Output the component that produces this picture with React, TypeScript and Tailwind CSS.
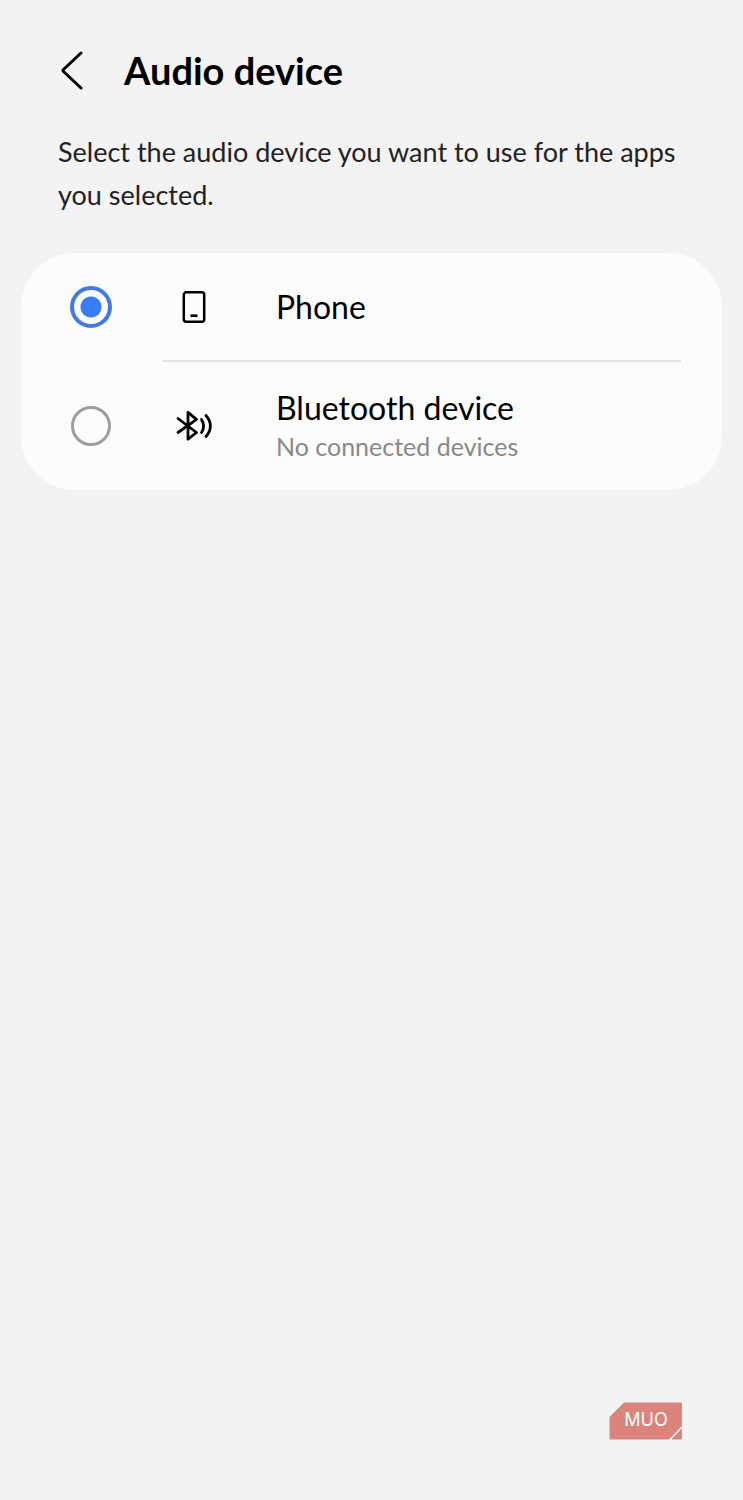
import React from 'react';

interface AudioDevice {
  id: string;
  name: string;
  status?: string;
  icon: React.ReactNode;
}

const PhoneIcon = () => (
  <svg width="40" height="40" viewBox="0 0 40 40" fill="none" stroke="#000000" aria-hidden="true">
    <rect x="9.800" y="5.300" width="20.400" height="29.400" rx="2.500" strokeWidth="2.500" />
    <path d="M16.500 28.700h7" strokeWidth="2.600" />
  </svg>
);

const BluetoothIcon = () => (
  <svg
    width="40"
    height="40"
    viewBox="0 0 40 40"
    fill="none"
    stroke="#000000"
    strokeWidth="2.800"
    strokeLinecap="round"
    strokeLinejoin="round"
    aria-hidden="true"
  >
    <path d="M4 12.500 22.500 26.500 14 33.200V6.300l8.500 7L4 26.500" />
    <path d="M27.500 13.500c2.600 4 2.600 9 0 13" />
    <path d="M32 9.500c5.800 6.500 5.800 14.500 0 21" />
  </svg>
);

const devices: AudioDevice[] = [
  { id: 'phone', name: 'Phone', icon: <PhoneIcon /> },
  { id: 'bluetooth', name: 'Bluetooth device', status: 'No connected devices', icon: <BluetoothIcon /> },
];

const Watermark = () => (
  <svg width="74" height="38" viewBox="0 0 74 38" role="img" aria-label="MUO">
    <path d="M15 1H72.500V24L60 37H1V15Z" fill="#dc837c" stroke="#c98f8b" />
    <path d="M72.500 27V37H63Z" fill="#dc837c" stroke="#c98f8b" />
    <text x="37" y="24" textAnchor="middle" fill="#ffffff" fontFamily="Inter, sans-serif" fontSize="18">
      MUO
    </text>
  </svg>
);

export default function App() {
  const [selected, setSelected] = React.useState('phone');

  return (
    <div className="flex min-h-screen flex-col bg-[#f3f3f3] font-['Lato',sans-serif] text-black">
      {/* Header */}
      <header className="flex items-center gap-8 px-14 pt-[46px]">
        <button type="button" aria-label="Back" className="flex h-12 w-9 items-center">
          <svg width="32" height="40" viewBox="0 0 32 40" fill="none" stroke="#000000" strokeWidth="3" strokeLinecap="round" strokeLinejoin="round">
            <path d="M25 3 7.500 19.500Q6.500 20.500 7.500 21.500L25 38" />
          </svg>
        </button>
        <h1 className="text-[38px] leading-12 font-bold">Audio device</h1>
      </header>

      <p className="px-[58px] pt-9 text-[27px] leading-[43px] text-[#222222]">
        Select the audio device you want to use for the apps you selected.
      </p>

      {/* Device list */}
      <div role="radiogroup" aria-label="Audio device" className="mx-[21px] mt-[37px] rounded-[54px] bg-[#fcfcfc]">
        {devices.map((device, i) => (
          <React.Fragment key={device.id}>
            {i > 0 && <div className="mr-[41px] ml-[141px] h-[2px] bg-[#e3e3e3]" />}
            <label
              className={`flex cursor-pointer items-center pr-10 pl-[49px] ${device.status ? 'h-32' : 'h-[107px]'}`}
            >
              <input
                type="radio"
                name="device"
                value={device.id}
                checked={selected === device.id}
                onChange={() => setSelected(device.id)}
                className="m-px size-10 shrink-0 appearance-none rounded-full border-[3px] border-[#9d9da2] checked:m-0 checked:size-[42px] checked:border-4 checked:border-[#4279e3] checked:bg-[radial-gradient(circle,#3b7cf7_10px,transparent_11px)]"
              />
              <span className="ml-[62px] shrink-0">{device.icon}</span>
              <span className="ml-[62px] flex flex-col">
                <span className="text-[32px] leading-10">{device.name}</span>
                {device.status && <span className="text-[25px] leading-9 text-[#888888]">{device.status}</span>}
              </span>
            </label>
          </React.Fragment>
        ))}
      </div>

      <footer className="mt-auto flex justify-end pr-15 pb-15">
        <Watermark />
      </footer>
    </div>
  );
}
